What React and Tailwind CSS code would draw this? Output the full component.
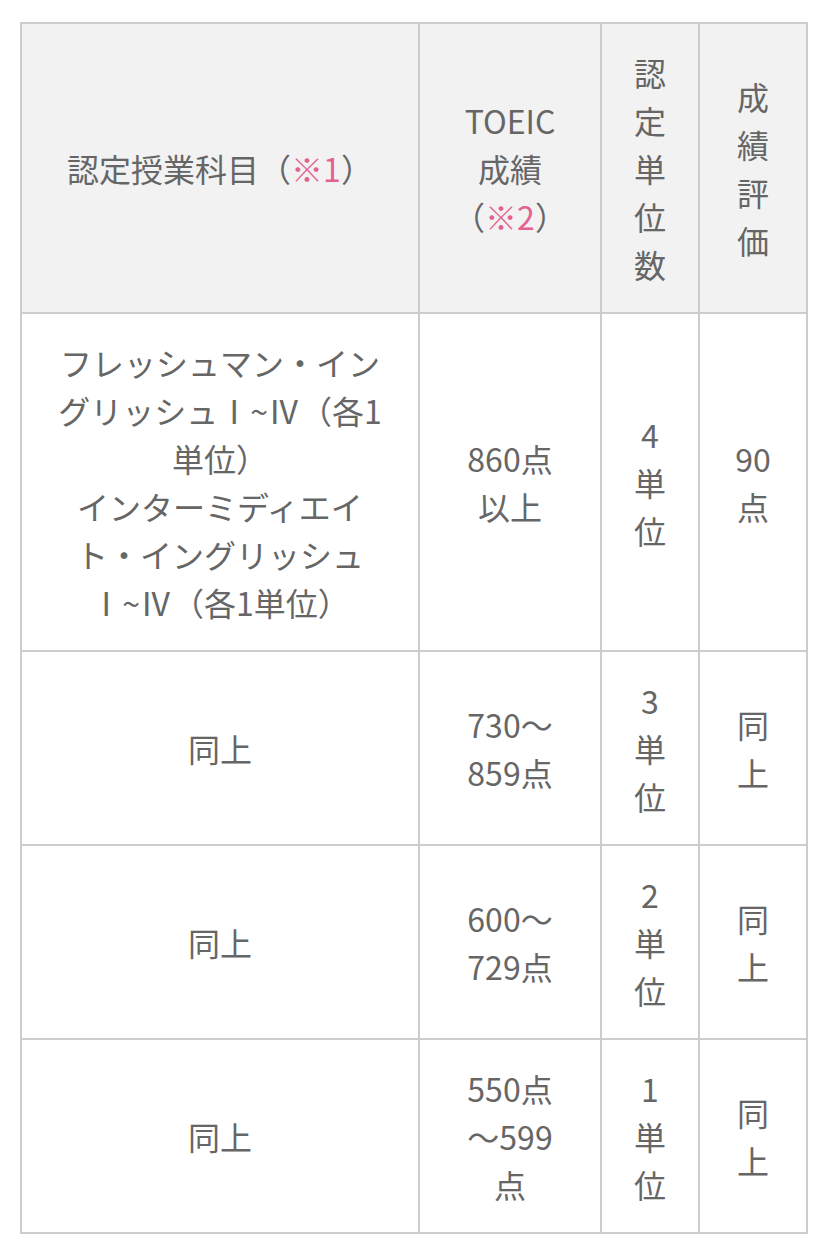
import React from "react";

const pink = "text-[#e4628f]";

// each cell is given as a list of lines, breaking exactly where the source wraps
const rows = [
  {
    subject: [
      "フレッシュマン・イン",
      "グリッシュⅠ~Ⅳ（各1",
      "単位）",
      "インターミディエイ",
      "ト・イングリッシュ",
      "Ⅰ~Ⅳ（各1単位）",
    ],
    score: ["860点", "以上"],
    units: ["4", "単", "位"],
    grade: ["90", "点"],
  },
  {
    subject: ["同上"],
    score: ["730〜", "859点"],
    units: ["3", "単", "位"],
    grade: ["同", "上"],
  },
  {
    subject: ["同上"],
    score: ["600〜", "729点"],
    units: ["2", "単", "位"],
    grade: ["同", "上"],
  },
  {
    subject: ["同上"],
    score: ["550点", "〜599", "点"],
    units: ["1", "単", "位"],
    grade: ["同", "上"],
  },
];

const Lines = ({ lines }) => (
  <>
    {lines.map((line, i) => (
      <div key={i} className="whitespace-nowrap">
        {line}
      </div>
    ))}
  </>
);

const cell =
  "border-2 border-[#cccccc] py-6 px-1 text-center align-middle";

export default function App() {
  return (
    <div
      className="bg-white min-h-[1243px] pt-[22px] pl-[20px] text-[#666666] text-[32px] leading-[48px]"
      style={{ fontFamily: '"Noto Sans CJK JP", "Noto Sans", sans-serif' }}
    >
      <table className="w-[786px] table-fixed border-collapse">
        <colgroup>
          <col className="w-[398px]" />
          <col className="w-[182px]" />
          <col className="w-[98px]" />
          <col className="w-[108px]" />
        </colgroup>
        <thead>
          <tr className="bg-[#f2f2f2]">
            <th className={`${cell} font-normal`}>
              <div className="whitespace-nowrap">
                認定授業科目（<span className={pink}>※1</span>）
              </div>
            </th>
            <th className={`${cell} font-normal`}>
              <div>TOEIC</div>
              <div>成績</div>
              <div className="whitespace-nowrap">
                （<span className={pink}>※2</span>）
              </div>
            </th>
            <th className={`${cell} font-normal`}>
              <Lines lines={["認", "定", "単", "位", "数"]} />
            </th>
            <th className={`${cell} font-normal`}>
              <Lines lines={["成", "績", "評", "価"]} />
            </th>
          </tr>
        </thead>
        <tbody>
          {rows.map((row, i) => (
            <tr key={i}>
              <td className={cell}>
                <Lines lines={row.subject} />
              </td>
              <td className={cell}>
                <Lines lines={row.score} />
              </td>
              <td className={cell}>
                <Lines lines={row.units} />
              </td>
              <td className={cell}>
                <Lines lines={row.grade} />
              </td>
            </tr>
          ))}
        </tbody>
      </table>
    </div>
  );
}
